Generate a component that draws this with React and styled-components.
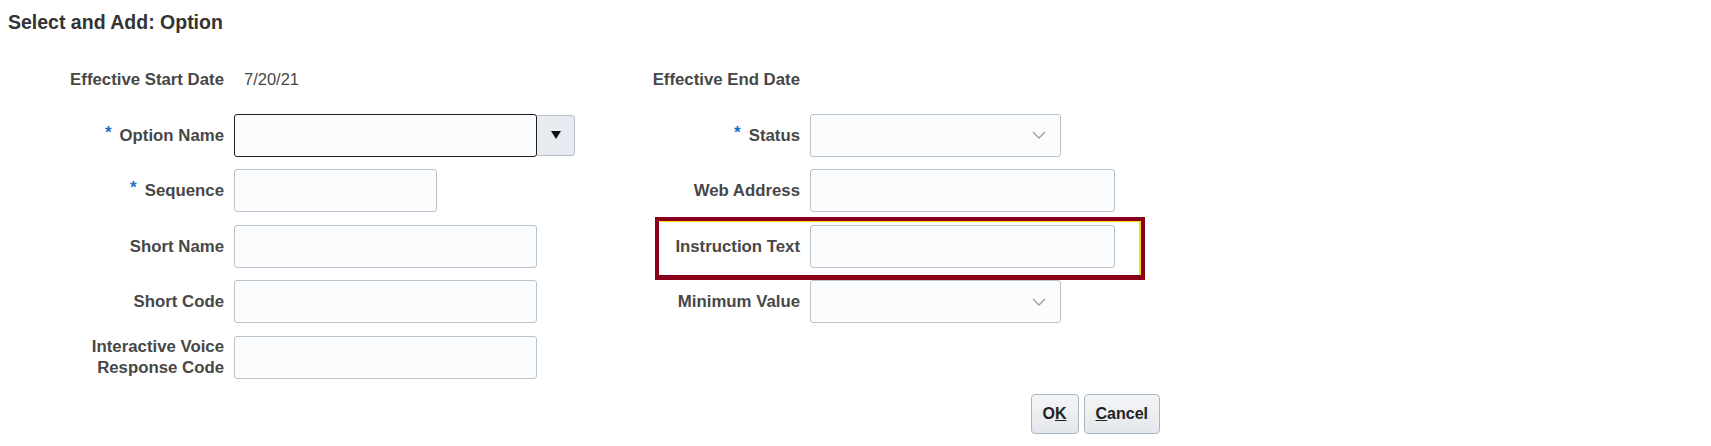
import React from 'react';
import styled, { createGlobalStyle } from 'styled-components';

const GlobalStyle = createGlobalStyle`
  body {
    margin: 0;
    background: #ffffff;
    font-family: "Liberation Sans", Arial, sans-serif;
  }
`;

const Page = styled.div`
  padding: 10px 8px 0 8px;
`;

const Title = styled.h1`
  margin: 0 0 24px 0;
  font-size: 19.5px;
  line-height: 24px;
  font-weight: bold;
  color: #333333;
`;

const Form = styled.div`
  display: flex;
  flex-direction: column;
  gap: 12.5px;
`;

const Row = styled.div`
  display: flex;
  height: 43px;
`;

const Group = styled.div`
  position: relative;
  display: flex;
  align-items: center;
  gap: 10px;
  margin-left: ${(p) => (p.$right ? '10px' : '0')};

  ${(p) =>
    p.$highlight &&
    `
    &::after {
      content: '';
      position: absolute;
      left: 70px;
      right: -30px;
      top: -8px;
      bottom: -12px;
      border: 4px solid #8a0019;
      border-bottom-width: 5px;
      box-shadow: inset -2px 1px 0 #f4e400;
      pointer-events: none;
    }
  `}
`;

const Label = styled.div`
  width: ${(p) => p.$width}px;
  flex-shrink: 0;
  text-align: right;
  font-size: 16.8px;
  line-height: 21px;
  font-weight: bold;
  color: #474747;
`;

const Required = styled.span`
  color: #1d6fc4;
  font-size: 17px;
  position: relative;
  top: -3px;
  margin-right: 8px;
`;

const Control = styled.div`
  width: ${(p) => p.$width}px;
  display: flex;
  align-items: center;
  height: 100%;
`;

const Value = styled.span`
  padding-left: 10px;
  font-size: 16.5px;
  color: #474747;
`;

const TextBox = styled.div`
  box-sizing: border-box;
  width: ${(p) => p.$width}px;
  height: 43px;
  background: #fbfcfe;
  border: 1px solid ${(p) => (p.$focused ? '#1e1e1e' : '#b7c2cd')};
  border-radius: 3px;
`;

const ComboButton = styled.div`
  box-sizing: border-box;
  width: 38px;
  height: 41px;
  display: flex;
  align-items: center;
  justify-content: center;
  background: #e7eaee;
  border: 1px solid #b3bfcb;
  border-left: none;
  border-radius: 0 4px 4px 0;
`;

const SelectBox = styled(TextBox)`
  display: flex;
  align-items: center;
  justify-content: flex-end;
  padding-right: 14px;
`;

const Actions = styled.div`
  display: flex;
  justify-content: flex-end;
  gap: 5px;
  width: 1152px;
  margin-top: 15.5px;
`;

const Button = styled.button`
  box-sizing: border-box;
  height: 40px;
  padding: 0 11px;
  font-family: "Liberation Sans", Arial, sans-serif;
  font-size: 16px;
  font-weight: bold;
  color: #222222;
  background: linear-gradient(#f4f5f7, #e3e7eb);
  border: 1px solid #a9b6c3;
  border-radius: 4px;
`;

const Triangle = () => (
  <svg width="10" height="8" viewBox="0 0 10 8">
    <path d="M0 0H10L5 8Z" fill="#111" />
  </svg>
);

const Chevron = () => (
  <svg width="14" height="8" viewBox="0 0 14 8">
    <polyline points="1,1 7,7 13,1" fill="none" stroke="#a3a6a9" strokeWidth="1.5" />
  </svg>
);

const LeftField = ({ label, required, children }) => (
  <Group>
    <Label $width={216}>
      {required && <Required>*</Required>}
      {label}
    </Label>
    <Control $width={341}>{children}</Control>
  </Group>
);

const RightField = ({ label, required, highlight, children }) => (
  <Group $right $highlight={highlight}>
    <Label $width={215}>
      {required && <Required>*</Required>}
      {label}
    </Label>
    <Control $width={305}>{children}</Control>
  </Group>
);

const App = () => {
  return (
    <Page>
      <GlobalStyle />
      <Title>Select and Add: Option</Title>
      <Form>
        <Row>
          <LeftField label="Effective Start Date">
            <Value>7/20/21</Value>
          </LeftField>
          <RightField label="Effective End Date" />
        </Row>
        <Row>
          <LeftField label="Option Name" required>
            <TextBox $width={303} $focused />
            <ComboButton>
              <Triangle />
            </ComboButton>
          </LeftField>
          <RightField label="Status" required>
            <SelectBox $width={251}>
              <Chevron />
            </SelectBox>
          </RightField>
        </Row>
        <Row>
          <LeftField label="Sequence" required>
            <TextBox $width={203} />
          </LeftField>
          <RightField label="Web Address">
            <TextBox $width={305} />
          </RightField>
        </Row>
        <Row>
          <LeftField label="Short Name">
            <TextBox $width={303} />
          </LeftField>
          <RightField label="Instruction Text" highlight>
            <TextBox $width={305} />
          </RightField>
        </Row>
        <Row>
          <LeftField label="Short Code">
            <TextBox $width={303} />
          </LeftField>
          <RightField label="Minimum Value">
            <SelectBox $width={251}>
              <Chevron />
            </SelectBox>
          </RightField>
        </Row>
        <Row>
          <LeftField
            label={
              <>
                Interactive Voice
                <br />
                Response Code
              </>
            }
          >
            <TextBox $width={303} />
          </LeftField>
        </Row>
      </Form>
      <Actions>
        <Button>
          O<u>K</u>
        </Button>
        <Button>
          <u>C</u>ancel
        </Button>
      </Actions>
    </Page>
  );
};

export default App;
